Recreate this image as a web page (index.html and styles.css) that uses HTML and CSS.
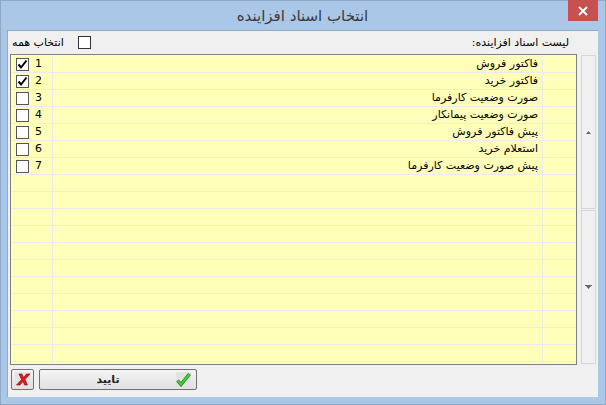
FILE: index.html
```html
<!DOCTYPE html>
<html lang="fa">
<head>
    <meta charset="UTF-8">
    <title>انتخاب اسناد افزاینده</title>
    <link rel="stylesheet" href="styles.css">
</head>
<body>
    <div class="window">
        <div class="titlebar">
            <span></span>
            <div class="title" dir="rtl">انتخاب اسناد افزاینده</div>
            <div class="close">
                <svg width="10" height="10" viewBox="0 0 10 10"><path d="M1 1 L9 9 M9 1 L1 9" stroke="#fff" stroke-width="2"/></svg>
            </div>
        </div>
        <div class="client">
            <div class="toolbar">
                <label class="select-all">
                    <span dir="rtl">انتخاب همه</span>
                    <span class="box"></span>
                </label>
                <div class="list-label" dir="rtl">لیست اسناد افزاینده:</div>
            </div>

            <div class="main">
                <div class="grid">
                    <div class="row">
                        <div class="cell num"><span class="box checked"><svg width="11" height="11" viewBox="0 0 11 11"><path d="M1.5 5.5 L4 8.5 L9.5 1.5" fill="none" stroke="#000" stroke-width="2"/></svg></span>1</div>
                        <div class="cell name" dir="rtl">فاکتور فروش</div>
                        <div class="cell"></div>
                    </div>
                    <div class="row">
                        <div class="cell num"><span class="box checked"><svg width="11" height="11" viewBox="0 0 11 11"><path d="M1.5 5.5 L4 8.5 L9.5 1.5" fill="none" stroke="#000" stroke-width="2"/></svg></span>2</div>
                        <div class="cell name" dir="rtl">فاکتور خرید</div>
                        <div class="cell"></div>
                    </div>
                    <div class="row">
                        <div class="cell num"><span class="box"></span>3</div>
                        <div class="cell name" dir="rtl">صورت وضعیت کارفرما</div>
                        <div class="cell"></div>
                    </div>
                    <div class="row">
                        <div class="cell num"><span class="box"></span>4</div>
                        <div class="cell name" dir="rtl">صورت وضعیت پیمانکار</div>
                        <div class="cell"></div>
                    </div>
                    <div class="row">
                        <div class="cell num"><span class="box"></span>5</div>
                        <div class="cell name" dir="rtl">پیش فاکتور فروش</div>
                        <div class="cell"></div>
                    </div>
                    <div class="row">
                        <div class="cell num"><span class="box"></span>6</div>
                        <div class="cell name" dir="rtl">استعلام خرید</div>
                        <div class="cell"></div>
                    </div>
                    <div class="row">
                        <div class="cell num"><span class="box"></span>7</div>
                        <div class="cell name" dir="rtl">پیش صورت وضعیت کارفرما</div>
                        <div class="cell"></div>
                    </div>
                    <div class="row"><div class="cell"></div><div class="cell"></div><div class="cell"></div></div>
                    <div class="row"><div class="cell"></div><div class="cell"></div><div class="cell"></div></div>
                    <div class="row"><div class="cell"></div><div class="cell"></div><div class="cell"></div></div>
                    <div class="row"><div class="cell"></div><div class="cell"></div><div class="cell"></div></div>
                    <div class="row"><div class="cell"></div><div class="cell"></div><div class="cell"></div></div>
                    <div class="row"><div class="cell"></div><div class="cell"></div><div class="cell"></div></div>
                    <div class="row"><div class="cell"></div><div class="cell"></div><div class="cell"></div></div>
                    <div class="row"><div class="cell"></div><div class="cell"></div><div class="cell"></div></div>
                    <div class="row"><div class="cell"></div><div class="cell"></div><div class="cell"></div></div>
                    <div class="row"><div class="cell"></div><div class="cell"></div><div class="cell"></div></div>
                    <div class="row"><div class="cell"></div><div class="cell"></div><div class="cell"></div></div>
                    <div class="row"><div class="cell"></div><div class="cell"></div><div class="cell"></div></div>
                </div>
                <div class="scroller">
                    <div class="sbtn">
                        <svg width="5" height="3" viewBox="0 0 5 3"><path d="M2.5 0 L5 3 L0 3 Z" fill="#666"/></svg>
                    </div>
                    <div class="sbtn">
                        <svg width="7" height="5" viewBox="0 0 7 5"><rect x="0" y="0" width="7" height="1" fill="#666"/><path d="M1 1 L6 1 L3.5 4 Z" fill="#666"/></svg>
                    </div>
                </div>
            </div>

            <div class="actions">
                <button class="btn cancel" type="button">
                    <span class="icon">
                        <svg width="16" height="15" viewBox="0 0 16 15">
                            <path d="M4 2 L7 2 L8.5 5.5 L11.5 2 L15 2 L10 7.5 L12.5 13 L9.5 13 L8 9.5 L5 13 L1.5 13 L6.5 7.5 Z" fill="#e3191b" stroke="#7a1010" stroke-width="0.6"/>
                        </svg>
                    </span>
                </button>
                <button class="btn ok" type="button">
                    <span class="label">تایید</span>
                    <span class="icon">
                        <svg width="15" height="15" viewBox="0 0 15 15">
                            <path d="M1.5 8.5 L5 12.5 L13.5 2" fill="none" stroke="#1c7d1c" stroke-width="3.4"/>
                            <path d="M1.5 8.5 L5 12.5 L13.5 2" fill="none" stroke="#3fcf35" stroke-width="2"/>
                        </svg>
                    </span>
                </button>
            </div>
        </div>
    </div>
</body>
</html>
```

FILE: styles.css
```css
body {
    margin: 0;
    font-family: "DejaVu Sans", sans-serif;
    font-size: 11px;
    color: #000;
}
.window {
    width: 606px;
    height: 405px;
    box-sizing: border-box;
    background: #abc7e7;
    border: 1px solid #8ea8c7;
    padding: 0 7px 7px 6px;
    display: flex;
    flex-direction: column;
}
.titlebar {
    height: 29px;
    display: grid;
    grid-template-columns: 31px 1fr 31px;
    align-items: start;
}
.title {
    text-align: center;
    font-size: 15px;
    color: #3a3a3a;
    line-height: 30px;
}
.close {
    margin-top: -1px;
    margin-left: 1px;
    height: 21px;
    background: #c75050;
    display: flex;
    align-items: center;
    justify-content: center;
}
.client {
    flex: 1;
    background: #f0f0f0;
    border-left: 1px solid #93aac6;
    border-top: 1px solid #93aac6;
    padding: 0 2px;
    display: flex;
    flex-direction: column;
}
.toolbar {
    height: 23px;
    display: flex;
    justify-content: space-between;
    align-items: center;
    padding: 0 27px 0 2px;
}
.select-all {
    display: flex;
    align-items: center;
    gap: 14px;
}
.box {
    width: 13px;
    height: 13px;
    box-sizing: border-box;
    border: 1px solid #555;
    background: #fff;
    display: inline-flex;
    align-items: center;
    justify-content: center;
}
.toolbar .box {
    border-color: #333;
}
.main {
    height: 311px;
    display: flex;
    gap: 4px;
}
.grid {
    width: 567px;
    box-sizing: border-box;
    border: 1px solid #808080;
    background: #ffffba;
    padding-top: 1px;
    overflow: hidden;
}
.row {
    height: 17px;
    box-sizing: border-box;
    border-bottom: 1px solid #ececec;
    display: grid;
    grid-template-columns: 42px 490px 1fr;
}
.cell {
    border-right: 1px solid #ececec;
    line-height: 16px;
}
.cell:last-child {
    border-right: none;
}
.num {
    display: flex;
    align-items: flex-start;
    gap: 6px;
    padding-left: 5px;
}
.num .box {
    margin-top: 2px;
}
.name {
    padding-right: 4px;
    white-space: nowrap;
}
.scroller {
    width: 15px;
    padding: 1px 0;
    display: flex;
    flex-direction: column;
    gap: 1px;
}
.sbtn {
    flex: 1;
    background: #f0f0f0;
    border: 1px solid #d6d6d6;
    display: flex;
    align-items: center;
    justify-content: center;
}
.actions {
    margin-top: 4px;
    padding-left: 1px;
    display: flex;
    gap: 5px;
}
.btn {
    height: 21px;
    box-sizing: border-box;
    border: 1px solid #707070;
    border-radius: 2px;
    background: linear-gradient(#f4f4f4, #e1e1e1);
    padding: 0;
    font-family: "DejaVu Sans", sans-serif;
    font-size: 11px;
    display: flex;
    align-items: center;
}
.cancel {
    width: 23px;
    justify-content: center;
}
.cancel .icon {
    background: #e4e4e4;
    display: flex;
}
.ok {
    width: 158px;
    padding-right: 5px;
}
.ok .label {
    flex: 1;
    text-align: center;
    font-weight: bold;
    color: #222;
}
.ok .icon {
    background: #e2e2e2;
    display: flex;
}
```
